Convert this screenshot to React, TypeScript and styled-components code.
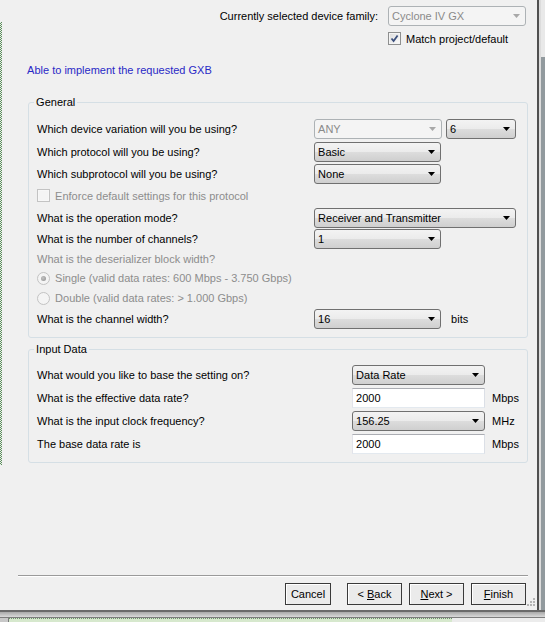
import React from "react";
import styled, { createGlobalStyle } from "styled-components";

const GlobalStyle = createGlobalStyle`
  html, body {
    margin: 0;
    padding: 0;
    background: #f0f0f0;
  }
  body {
    font-family: "Liberation Sans", Arial, sans-serif;
    font-size: 11px;
    color: #000;
  }
`;

const Screen = styled.div`
  width: 545px;
  height: 622px;
  display: flex;
  flex-direction: column;
  overflow: hidden;
`;

const WindowArea = styled.div`
  display: flex;
  height: 610px;
`;

const Dialog = styled.div`
  position: relative;
  width: 537px;
  height: 610px;
  display: flex;
  background: #f0f0f0;
`;

const Gutter = styled.div`
  width: 3px;
  padding-top: 22px;
`;

const DotLine = styled.div`
  width: 2px;
  height: 443px;
  background: repeating-conic-gradient(#5d8b5d 0 25%, #e6efe6 0 50%) 0 0 / 2px 2px;
`;

const Main = styled.div`
  flex: 1;
  display: flex;
  flex-direction: column;
`;

// top: device family
const Header = styled.div`
  display: grid;
  grid-template-columns: auto 138px;
  grid-template-rows: 21px 15px;
  column-gap: 10px;
  row-gap: 5px;
  justify-content: end;
  align-items: center;
  padding: 5px 11px 0 0;
`;

const HeaderLabel = styled.span`
  text-align: right;
`;

const CheckRow = styled.label<{ $col?: number; $muted?: boolean }>`
  display: flex;
  align-items: center;
  gap: 5px;
  ${p => (p.$col ? `grid-column: ${p.$col};` : "")}
  color: ${p => (p.$muted ? "#8d8d8d" : "#000")};
`;

const Status = styled.div`
  margin-top: 18px;
  padding-left: 25px;
  line-height: 13px;
  color: #2929c6;
`;

const Group = styled.fieldset<{ $top: number; $pt: number; $pb: number }>`
  margin: ${p => p.$top}px 9px 0 26px;
  padding: ${p => p.$pt}px 8px ${p => p.$pb}px 8px;
  border: 1px solid #d5dfe5;
  border-radius: 3px;
  min-width: 0;
`;

const Legend = styled.legend`
  margin-left: -3px;
  padding: 0 2px;
  line-height: 13px;
`;

const Row = styled.div<{ $h: number }>`
  display: flex;
  align-items: center;
  height: ${p => p.$h}px;
`;

const Label = styled.span<{ $w: number; $muted?: boolean }>`
  width: ${p => p.$w}px;
  flex-shrink: 0;
  color: ${p => (p.$muted ? "#8d8d8d" : "#000")};
`;

const Combo = styled.div<{ $w: number; $disabled?: boolean; $gap?: number }>`
  box-sizing: border-box;
  width: ${p => p.$w}px;
  height: 20px;
  margin-left: ${p => p.$gap ?? 0}px;
  display: flex;
  align-items: center;
  justify-content: space-between;
  padding: 0 5px 0 3px;
  border: 1px solid ${p => (p.$disabled ? "#adb2b5" : "#707070")};
  border-radius: 3px;
  background: ${p =>
    p.$disabled
      ? "#f4f4f4"
      : "linear-gradient(#f3f3f3 0%, #ebebeb 50%, #dddddd 50%, #cfcfcf 100%)"};
  color: ${p => (p.$disabled ? "#8a8a8a" : "#000")};
`;

const TextBox = styled.div<{ $w: number }>`
  box-sizing: border-box;
  width: ${p => p.$w}px;
  height: 20px;
  display: flex;
  align-items: center;
  padding-left: 3px;
  background: #fff;
  border: 1px solid;
  border-color: #abadb3 #dbdfe6 #e3e9ef #e2e3ea;
`;

const Unit = styled.span<{ $gap: number }>`
  margin-left: ${p => p.$gap}px;
`;

const Box = styled.span<{ $disabled?: boolean }>`
  box-sizing: border-box;
  width: 13px;
  height: 13px;
  flex-shrink: 0;
  display: flex;
  align-items: center;
  justify-content: center;
  border: 1px solid ${p => (p.$disabled ? "#c3c3c3" : "#8e8f8f")};
  background: ${p =>
    p.$disabled ? "#f4f4f4" : "linear-gradient(135deg, #dcdcdc, #fbfbfb)"};
  box-shadow: inset 0 0 0 1px ${p => (p.$disabled ? "#f7f7f7" : "#f4f4f4")};
`;

const Radio = styled.span`
  box-sizing: border-box;
  width: 13px;
  height: 13px;
  flex-shrink: 0;
  border-radius: 50%;
  display: flex;
  align-items: center;
  justify-content: center;
  border: 1px solid #c3c3c3;
  background: #f4f4f4;
`;

const RadioDot = styled.span`
  width: 5px;
  height: 5px;
  border-radius: 50%;
  background: radial-gradient(circle at 40% 40%, #c4c4c4, #8c8c8c);
`;

const Footer = styled.div`
  margin-top: auto;
  display: flex;
  flex-direction: column;
`;

const Separator = styled.div`
  margin: 0 9px 0 16px;
  border-top: 1px solid #9a9a9a;
  border-bottom: 1px solid #fff;
`;

const ButtonRow = styled.div`
  display: flex;
  justify-content: flex-end;
  gap: 7px;
  margin-top: 6px;
  padding: 0 11px 5px 0;
`;

const Button = styled.button<{ $w: number; $after?: number }>`
  box-sizing: border-box;
  width: ${p => p.$w}px;
  height: 22px;
  margin: 0 ${p => p.$after ?? 0}px 0 0;
  padding: 0;
  font: inherit;
  color: #000;
  background: #ebebeb;
  border: 1px solid #3a3a3a;
  box-shadow: inset 1px 1px 0 #fff;
  border-radius: 0;
`;

const Grip = styled.svg`
  position: absolute;
  right: 2px;
  bottom: 4px;
`;

const RightFrame = styled.div`
  width: 8px;
  display: flex;
  border-left: 2px solid #505050;
`;

const FrameInner = styled.div`
  width: 2px;
  background: #dcdcdc;
`;

const FrameOuter = styled.div`
  flex: 1;
  display: flex;
  flex-direction: column;
`;

const FrameTop = styled.div`
  height: 57px;
  background: #e9e9e9;
`;

const FrameRest = styled.div`
  flex: 1;
  background: #929a9e;
`;

const BottomFrame = styled.div`
  height: 12px;
  display: flex;
  flex-direction: column;
`;

const FrameEdge = styled.div`
  height: 2px;
  background: #6a6a6a;
`;

const FrameBevel = styled.div`
  height: 5px;
  background: linear-gradient(#a9a9a9, #d9d9d9);
`;

const FrameLine = styled.div`
  height: 1px;
  background: #7d7d7d;
`;

const Strip = styled.div`
  flex: 1;
  display: flex;
`;

const StripEdge = styled.div`
  width: 8px;
  background: #c8c8c8;
  border-right: 1px solid #7a7a7a;
`;

const StripGreen = styled.div`
  width: 443px;
  background: #d6e8cd;
  border-top: 1px dotted #6d8f6d;
`;

const StripRest = styled.div`
  flex: 1;
  background: #ececec;
`;

function Arrow({ disabled }: { disabled?: boolean }) {
  return (
    <svg width="7" height="4" viewBox="0 0 7 4">
      <path d="M0 0h7L3.5 4z" fill={disabled ? "#a8a8a8" : "#000"} />
    </svg>
  );
}

function Select({ value, w, disabled, gap }: { value: string; w: number; disabled?: boolean; gap?: number }) {
  return (
    <Combo $w={w} $disabled={disabled} $gap={gap}>
      <span>{value}</span>
      <Arrow disabled={disabled} />
    </Combo>
  );
}

function Check({ disabled, checked }: { disabled?: boolean; checked?: boolean }) {
  return (
    <Box $disabled={disabled}>
      {checked && (
        <svg width="9" height="9" viewBox="0 0 9 9">
          <path d="M1.5 4.5 L3.6 7 L7.6 1.5" stroke="#3b4f7c" strokeWidth="1.8" fill="none" />
        </svg>
      )}
    </Box>
  );
}

const LW1 = 277;
const LW2 = 315;

export default function App() {
  return (
    <>
      <GlobalStyle />
      <Screen>
        <WindowArea>
          <Dialog>
            <Gutter>
              <DotLine />
            </Gutter>
            <Main>
              <Header>
                <HeaderLabel>Currently selected device family:</HeaderLabel>
                <Select value="Cyclone IV GX" w={138} disabled />
                <CheckRow $col={2}>
                  <Check checked />
                  Match project/default
                </CheckRow>
              </Header>

              <Status>Able to implement the requested GXB</Status>

              <Group $top={19} $pt={8} $pb={7}>
                <Legend>General</Legend>
                <Row $h={23}>
                  <Label $w={LW1}>Which device variation will you be using?</Label>
                  <Select value="ANY" w={128} disabled />
                  <Select value="6" w={70} gap={4} />
                </Row>
                <Row $h={23}>
                  <Label $w={LW1}>Which protocol will you be using?</Label>
                  <Select value="Basic" w={127} />
                </Row>
                <Row $h={22}>
                  <Label $w={LW1}>Which subprotocol will you be using?</Label>
                  <Select value="None" w={127} />
                </Row>
                <Row $h={21}>
                  <CheckRow $muted>
                    <Check disabled />
                    Enforce default settings for this protocol
                  </CheckRow>
                </Row>
                <Row $h={23}>
                  <Label $w={LW1}>What is the operation mode?</Label>
                  <Select value="Receiver and Transmitter" w={202} />
                </Row>
                <Row $h={20}>
                  <Label $w={LW1}>What is the number of channels?</Label>
                  <Select value="1" w={127} />
                </Row>
                <Row $h={19}>
                  <Label $w={LW1} $muted>What is the deserializer block width?</Label>
                </Row>
                <Row $h={20}>
                  <CheckRow $muted>
                    <Radio>
                      <RadioDot />
                    </Radio>
                    Single (valid data rates: 600 Mbps - 3.750 Gbps)
                  </CheckRow>
                </Row>
                <Row $h={20}>
                  <CheckRow $muted>
                    <Radio />
                    Double (valid data rates: &gt; 1.000 Gbps)
                  </CheckRow>
                </Row>
                <Row $h={22}>
                  <Label $w={LW1}>What is the channel width?</Label>
                  <Select value="16" w={127} />
                  <Unit $gap={10}>bits</Unit>
                </Row>
              </Group>

              <Group $top={5} $pt={8} $pb={7}>
                <Legend>Input Data</Legend>
                <Row $h={22}>
                  <Label $w={LW2}>What would you like to base the setting on?</Label>
                  <Select value="Data Rate" w={133} />
                </Row>
                <Row $h={23}>
                  <Label $w={LW2}>What is the effective data rate?</Label>
                  <TextBox $w={133}>2000</TextBox>
                  <Unit $gap={7}>Mbps</Unit>
                </Row>
                <Row $h={23}>
                  <Label $w={LW2}>What is the input clock frequency?</Label>
                  <Select value="156.25" w={133} />
                  <Unit $gap={7}>MHz</Unit>
                </Row>
                <Row $h={23}>
                  <Label $w={LW2}>The base data rate is</Label>
                  <TextBox $w={133}>2000</TextBox>
                  <Unit $gap={7}>Mbps</Unit>
                </Row>
              </Group>

              <Footer>
                <Separator />
                <ButtonRow>
                  <Button $w={46} $after={9}>Cancel</Button>
                  <Button $w={55}>&lt; <u>B</u>ack</Button>
                  <Button $w={55}><u>N</u>ext &gt;</Button>
                  <Button $w={55}><u>F</u>inish</Button>
                </ButtonRow>
              </Footer>
            </Main>
            <Grip width="8" height="8" viewBox="0 0 8 8">
              <g fill="#b4b4b4">
                <rect x="6" y="0" width="2" height="2" />
                <rect x="3" y="3" width="2" height="2" />
                <rect x="6" y="3" width="2" height="2" />
                <rect x="0" y="6" width="2" height="2" />
                <rect x="3" y="6" width="2" height="2" />
                <rect x="6" y="6" width="2" height="2" />
              </g>
            </Grip>
          </Dialog>
          <RightFrame>
            <FrameInner />
            <FrameOuter>
              <FrameTop />
              <FrameRest />
            </FrameOuter>
          </RightFrame>
        </WindowArea>
        <BottomFrame>
          <FrameEdge />
          <FrameBevel />
          <FrameLine />
          <Strip>
            <StripEdge />
            <StripGreen />
            <StripRest />
          </Strip>
        </BottomFrame>
      </Screen>
    </>
  );
}
